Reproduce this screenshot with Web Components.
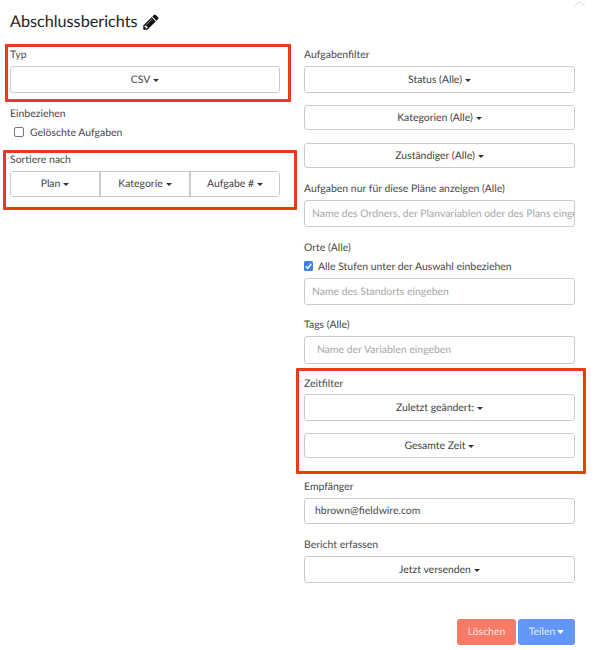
<!DOCTYPE html>
<html lang="de"><head><meta charset="utf-8"><title>Abschlussberichts</title>
<style>
html,body{margin:0;padding:0;background:#fff}
body{font-family:Lato,"Open Sans",sans-serif;color:#333;width:596px;height:650px;overflow:hidden;text-rendering:geometricPrecision}
</style></head><body>
<report-dialog>
  <div slot="left">
    <mark-box out="3 11 9 5">
      <field-label>Typ</field-label>
      <select-btn>CSV</select-btn>
    </mark-box>
    <field-label style="margin-top:13px">Einbeziehen</field-label>
    <check-row style="margin:1px 0 0 4px;gap:6px">Gelöschte Aufgaben</check-row>
    <mark-box out="2 17 13 7" style="margin-top:13px">
      <field-label>Sortiere nach</field-label>
      <btn-group><select-btn joined>Plan</select-btn><select-btn joined>Kategorie</select-btn><select-btn joined>Aufgabe #</select-btn></btn-group>
    </mark-box>
  </div>
  <div slot="right">
    <field-label>Aufgabenfilter</field-label>
    <select-btn>Status (Alle)</select-btn>
    <select-btn style="margin-top:12px;--h:25px">Kategorien (Alle)</select-btn>
    <select-btn style="margin-top:13px;--h:25px">Zuständiger (Alle)</select-btn>
    <field-label style="margin-top:13px">Aufgaben nur für diese Pläne anzeigen (Alle)</field-label>
    <text-field pad="8" placeholder="Name des Ordners, der Planvariablen oder des Plans eingeben"></text-field>
    <field-label style="margin-top:13px">Orte (Alle)</field-label>
    <check-row checked>Alle Stufen unter der Auswahl einbeziehen</check-row>
    <text-field pad="8" placeholder="Name des Standorts eingeben" style="margin-top:5px"></text-field>
    <field-label style="margin-top:12px">Tags (Alle)</field-label>
    <text-field pad="13" placeholder="Name der Variablen eingeben" style="--h:28px"></text-field>
    <mark-box out="8 11 16 8" style="margin-top:12px">
      <field-label style="margin-bottom:4px">Zeitfilter</field-label>
      <select-btn>Zuletzt geändert:</select-btn>
      <select-btn style="margin-top:12px;--h:25px">Gesamte Zeit</select-btn>
    </mark-box>
    <field-label style="margin-top:21px">Empfänger</field-label>
    <text-field pad="11" value="hbrown@fieldwire.com" style="--h:26px"></text-field>
    <field-label style="margin-top:13px">Bericht erfassen</field-label>
    <select-btn>Jetzt versenden</select-btn>
  </div>
</report-dialog>
<script>
function def(name, css, html){
  customElements.define(name, class extends HTMLElement{
    connectedCallback(){
      if(this.shadowRoot) return;
      const r=this.attachShadow({mode:'open'});
      r.innerHTML='<style>'+css+'</style>'+(typeof html==='function'?html(this):html);
    }
  });
}
const caret='<svg class="c" width="6" height="3" viewBox="0 0 6 3"><path d="M0 0h6L3 3z" fill="currentColor"/></svg>';
const caret2='<svg class="c" width="7" height="4" viewBox="0 0 7 4"><path d="M0 0h7L3.5 4z" fill="currentColor"/></svg>';
const FS='10.45px';
def('report-dialog',`
  :host{display:block;position:relative;width:596px;height:650px;box-sizing:border-box;padding:12px 21px 0 10px}
  h1{margin:0;font:400 16.2px/20px Lato,sans-serif;color:#222;display:flex;align-items:center;gap:5px;height:20px}
  .cols{display:grid;grid-template-columns:270px 271px;column-gap:24px;margin-top:15px}
  .foot{position:absolute;right:21px;top:619px;display:flex;gap:2px}
  button{font:400 ${FS} Lato,sans-serif;text-rendering:geometricPrecision;color:rgba(255,255,255,.82);border:0;border-radius:3px;height:26px;padding:0;display:flex;align-items:center;justify-content:center;gap:2px}
  .del{width:59px;background:#fa7a68}
  .sh{width:57px;background:#6496fa}
  .sh .c{color:#fff}
  .x{position:absolute;left:573px;top:0}
`,`
  <svg class="x" width="13" height="8" viewBox="0 0 13 8"><path d="M1 6.5 6.5 1 12 6.5" fill="none" stroke="#dcdcdc" stroke-width="1"/></svg>
  <h1>Abschlussberichts <svg width="18" height="18" viewBox="0 0 1792 1792"><path fill="#111" d="M491 1536l91-91-235-235-91 91v107h128v128h107zm523-928q0-22-22-22-10 0-17 7l-542 542q-7 7-7 17 0 22 22 22 10 0 17-7l542-542q7-7 7-17zm-54-192l416 416-832 832h-416v-416zm683 96q0 53-37 90l-166 166-416-416 166-165q36-38 90-38 53 0 91 38l235 234q37 39 37 91z"/></svg></h1>
  <div class="cols"><div><slot name="left"></slot></div><div><slot name="right"></slot></div></div>
  <div class="foot"><button class="del">Löschen</button><button class="sh">Teilen ${caret2}</button></div>
`);
def('field-label',`:host{display:block;font:400 ${FS}/16px Lato,sans-serif;color:#4a4a4a;height:14px;margin-bottom:5px}`,'<slot></slot>');
def('select-btn',`
  :host{display:flex;flex:1 1 0;box-sizing:border-box;height:var(--h,27px);border:1px solid #ccc;border-radius:3px;background:#fff;align-items:center;justify-content:center;gap:3px;font:400 ${FS} Lato,sans-serif;color:#444}
  :host([joined]){border:0;border-right:2px solid #ccc;border-radius:0;height:24px}
  :host([joined]:last-child){border-right:0}
  .c{color:#333;margin-top:1px}
`,()=>'<slot></slot>'+caret);
def('btn-group',`:host{display:flex;border:1px solid #ccc;border-radius:3px;height:24px}`,'<slot></slot>');
def('text-field',`
  :host{display:flex;box-sizing:border-box;height:var(--h,27px);border:1px solid #ccc;border-radius:3px;background:#fff;align-items:center;overflow:hidden;font:400 ${FS} Lato,sans-serif;white-space:nowrap}
  .ph{color:#a8a8a8}.v{color:#4a4a4a}
`,h=>{const p=h.getAttribute('pad')||8;const ph=h.getAttribute('placeholder');const v=h.getAttribute('value');return `<span style="padding-left:${p-1}px" class="${ph?'ph':'v'}">${ph||v}</span>`});
def('check-row',`
  :host{display:flex;align-items:center;gap:5px;height:14px;font:400 ${FS}/14px Lato,sans-serif;color:#4a4a4a}
  .b{width:8px;height:8px;border:1px solid #767676;border-radius:2px;background:#fff;flex:none;display:block}
  svg{display:block;flex:none}
  span.t{position:relative;top:1px}
`,h=>h.hasAttribute('checked')?'<svg width="9" height="10" viewBox="0 0 9 10"><rect width="9" height="10" rx="1.5" fill="#3b82e8"/><path d="M1.8 5.2 3.8 7.4 7.2 2.8" fill="none" stroke="#fff" stroke-width="1.5"/></svg><span class="t"><slot></slot></span>':'<span class="b"></span><span class="t"><slot></slot></span>');
def('mark-box',`
  :host{display:block;position:relative}
  .o{position:absolute;border:3px solid #ec3a18;border-radius:1px;pointer-events:none}
`,h=>{const [t,r,b,l]=h.getAttribute('out').split(' ');return `<slot></slot><div class="o" style="top:-${t}px;right:-${r}px;bottom:-${b}px;left:-${l}px"></div>`});
</script>
</body></html>
